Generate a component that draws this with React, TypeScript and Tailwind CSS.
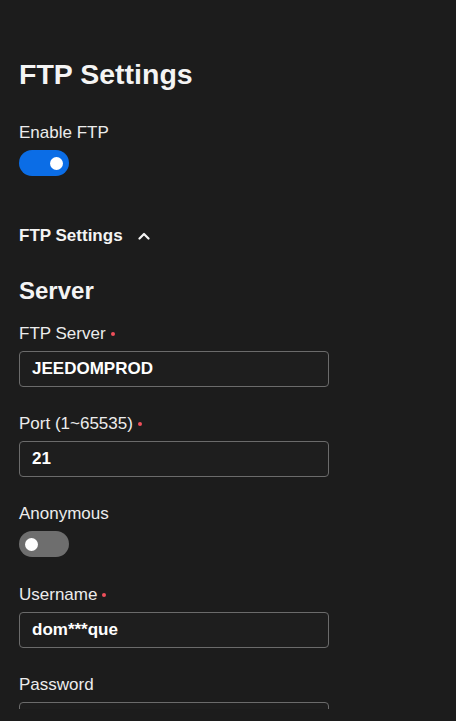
import React from "react";

const font = { fontFamily: '"Liberation Sans", Arial, sans-serif' };

const Toggle = ({ on }: { on: boolean }) => (
  <div
    className={`flex items-center w-[50px] h-[26px] rounded-full px-[6px] ${
      on ? "bg-[#0b6de6] justify-end" : "bg-[#6e6e6e] justify-start"
    }`}
  >
    <div className="w-[13px] h-[13px] rounded-full bg-white" />
  </div>
);

const Field = ({
  label,
  value,
  required,
}: {
  label: string;
  value: string;
  required?: boolean;
}) => (
  <div className="mb-[26px]">
    <div className="flex items-center h-[21px] pt-[1px] text-[17px] leading-[20px] text-[#ececec]">
      {label}
      {required && <span className="ml-[5px] w-[4px] h-[4px] rounded-full bg-[#ef4f5a]" />}
    </div>
    <div className="mt-[7px] w-[310px] h-[36px] rounded-[4px] border border-[#6b6b6b] bg-[#1e1e1e] flex items-center px-[12px] text-[17px] font-bold text-white">
      {value}
    </div>
  </div>
);

export default function App() {
  return (
    <div className="w-[456px] h-[721px] bg-[#1c1c1c] overflow-hidden" style={font}>
      <div className="h-[709px] overflow-hidden px-[19px] pt-[57px]">
        <h1 className="text-[28.5px] leading-[34px] font-bold text-[#f4f4f4]">FTP Settings</h1>

        <div className="mt-[31px] h-[21px] pt-[1px] text-[17px] leading-[20px] text-[#ececec]">Enable FTP</div>
        <div className="mt-[7px]">
          <Toggle on />
        </div>

        <div className="mt-[50px] flex items-center h-[20px]">
          <span className="text-[17px] leading-[20px] font-bold text-[#f4f4f4]">FTP Settings</span>
          <svg
            className="ml-[15px]"
            width="12"
            height="9"
            viewBox="0 0 12 9"
            fill="none"
            stroke="#f4f4f4"
            strokeWidth="2.2"
            strokeLinecap="round"
            strokeLinejoin="round"
          >
            <path d="M1.5 6.5 6 2l4.5 4.5" />
          </svg>
        </div>

        <h2 className="mt-[31px] text-[24px] leading-[28px] font-bold text-[#f4f4f4]">Server</h2>

        <div className="mt-[18px]">
          <Field label="FTP Server" value="JEEDOMPROD" required />
          <Field label="Port (1~65535)" value="21" required />

          <div className="mb-[27px]">
            <div className="h-[21px] pt-[1px] text-[17px] leading-[20px] text-[#ececec]">Anonymous</div>
            <div className="mt-[7px]">
              <Toggle on={false} />
            </div>
          </div>

          <Field label="Username" value="dom***que" required />
          <Field label="Password" value="" />
        </div>
      </div>
    </div>
  );
}
